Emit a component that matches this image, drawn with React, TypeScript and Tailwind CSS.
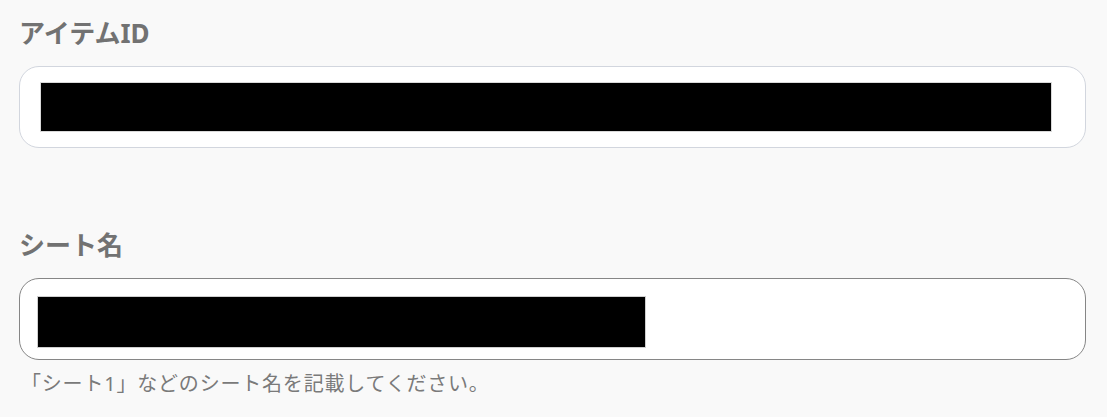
import React from 'react';

const FONT = '"Noto Sans", "Noto Sans CJK JP", sans-serif';

function Field({
  label,
  borderClass,
  fill,
  help,
  top,
}: {
  label: string;
  borderClass: string;
  fill: string;
  help?: string;
  top: string;
}) {
  return (
    <div className={`flex flex-col ${top}`}>
      <div className="h-[36px] text-[26px] leading-[36px] font-bold text-[#727272]">{label}</div>
      <div className={`mt-[15px] h-[82px] rounded-[20px] border bg-white ${borderClass}`}>
        <div className={fill} />
      </div>
      {help && (
        <div className="mt-[10px] text-[20px] leading-[27px] text-[#7a7a7a] pl-[2px] tracking-[0.8px]">
          {help}
        </div>
      )}
    </div>
  );
}

export default function App() {
  return (
    <div
      className="w-[1107px] h-[417px] bg-[#f9f9f9] pl-[19px] pr-[21px] pt-[15px] overflow-hidden"
      style={{ fontFamily: FONT }}
    >
      <Field
        label="アイテムID"
        borderClass="border-[#d2d6de]"
        fill="ml-[20px] mt-[15px] w-[1012px] h-[50px] bg-black border border-[#d9d9d9]"
        top=""
      />
      <Field
        label="シート名"
        borderClass="border-[#868686]"
        fill="ml-[17px] mt-[17px] w-[609px] h-[52px] bg-black border border-[#cfcfcf]"
        help="「シート1」などのシート名を記載してください。"
        top="mt-[79px]"
      />
    </div>
  );
}
